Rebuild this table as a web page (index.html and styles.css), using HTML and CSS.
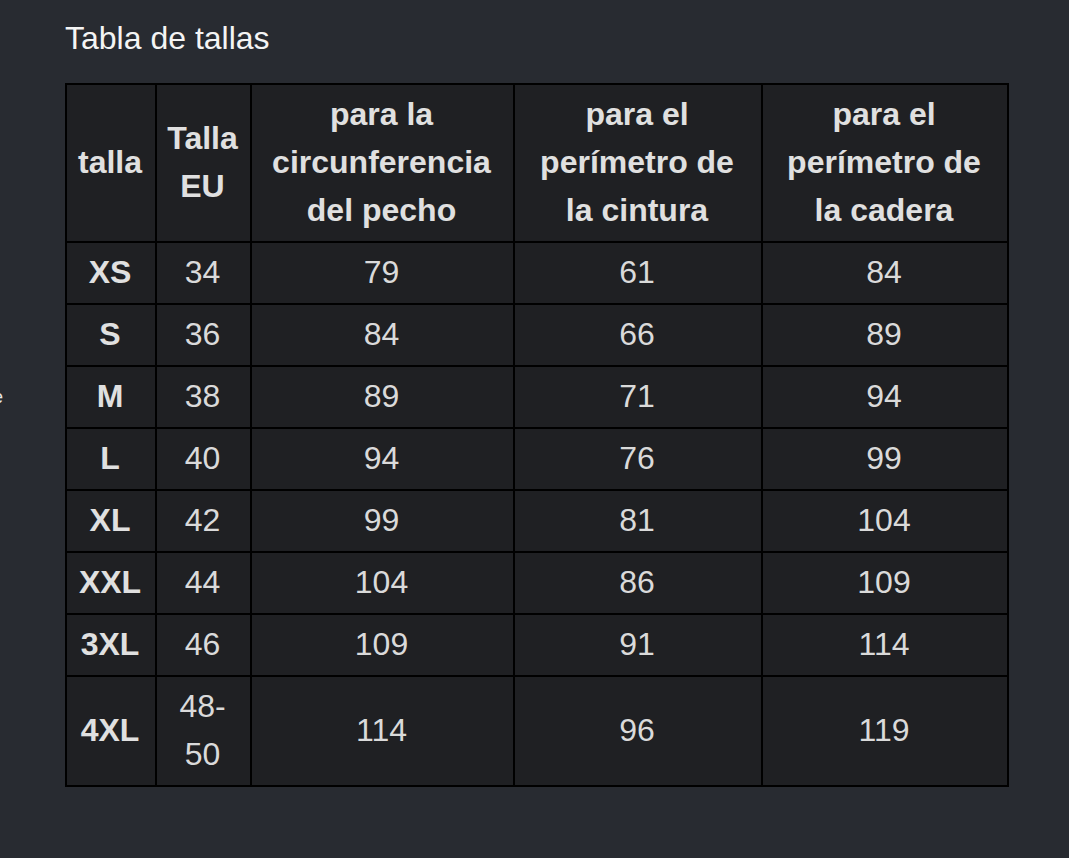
FILE: index.html
```html
<!DOCTYPE html>
<html lang="es">
<head>
<meta charset="utf-8">
<title>Tabla de tallas</title>
<link rel="stylesheet" href="styles.css">
</head>
<body>
<span class="edge-glyph">e</span>
<main class="page">
  <h2 class="title">Tabla de tallas</h2>
  <table class="sizes">
    <colgroup>
      <col class="c1"><col class="c2"><col class="c3"><col class="c4"><col class="c5">
    </colgroup>
    <thead>
      <tr>
        <th>talla</th>
        <th>Talla EU</th>
        <th>para la circunferencia del pecho</th>
        <th>para el perímetro de la cintura</th>
        <th>para el perímetro de la cadera</th>
      </tr>
    </thead>
    <tbody>
      <tr><th>XS</th><td>34</td><td>79</td><td>61</td><td>84</td></tr>
      <tr><th>S</th><td>36</td><td>84</td><td>66</td><td>89</td></tr>
      <tr><th>M</th><td>38</td><td>89</td><td>71</td><td>94</td></tr>
      <tr><th>L</th><td>40</td><td>94</td><td>76</td><td>99</td></tr>
      <tr><th>XL</th><td>42</td><td>99</td><td>81</td><td>104</td></tr>
      <tr><th>XXL</th><td>44</td><td>104</td><td>86</td><td>109</td></tr>
      <tr><th>3XL</th><td>46</td><td>109</td><td>91</td><td>114</td></tr>
      <tr><th>4XL</th><td>48-50</td><td>114</td><td>96</td><td>119</td></tr>
    </tbody>
  </table>
</main>
</body>
</html>
```
FILE: styles.css
```css
html, body {
  margin: 0;
  padding: 0;
}
body {
  background: #282b31;
  font-family: "Liberation Sans", Arial, sans-serif;
  min-height: 858px;
  position: relative;
  overflow: hidden;
}
.edge-glyph {
  position: absolute;
  left: -7px;
  top: 386px;
  font-size: 18px;
  line-height: 22px;
  color: #e6e6e6;
}
.page {
  padding: 20px 0 0 65px;
}
.title {
  margin: 0 0 27px 0;
  font-size: 32px;
  line-height: 36px;
  font-weight: normal;
  color: #f4f4f4;
}
.sizes {
  border-collapse: collapse;
  table-layout: fixed;
  width: 942px;
  background: #1f2023;
}
.c1 { width: 90px; }
.c2 { width: 95px; }
.c3 { width: 263px; }
.c4 { width: 248px; }
.c5 { width: 246px; }
.sizes th,
.sizes td {
  border: 2px solid #000;
  padding: 5px 12px 7px 10px;
  font-size: 32px;
  line-height: 48px;
  text-align: center;
  vertical-align: middle;
}
.sizes th {
  font-weight: bold;
  color: #e0e0e0;
}
.sizes td {
  font-weight: normal;
  color: #dadada;
}
```
